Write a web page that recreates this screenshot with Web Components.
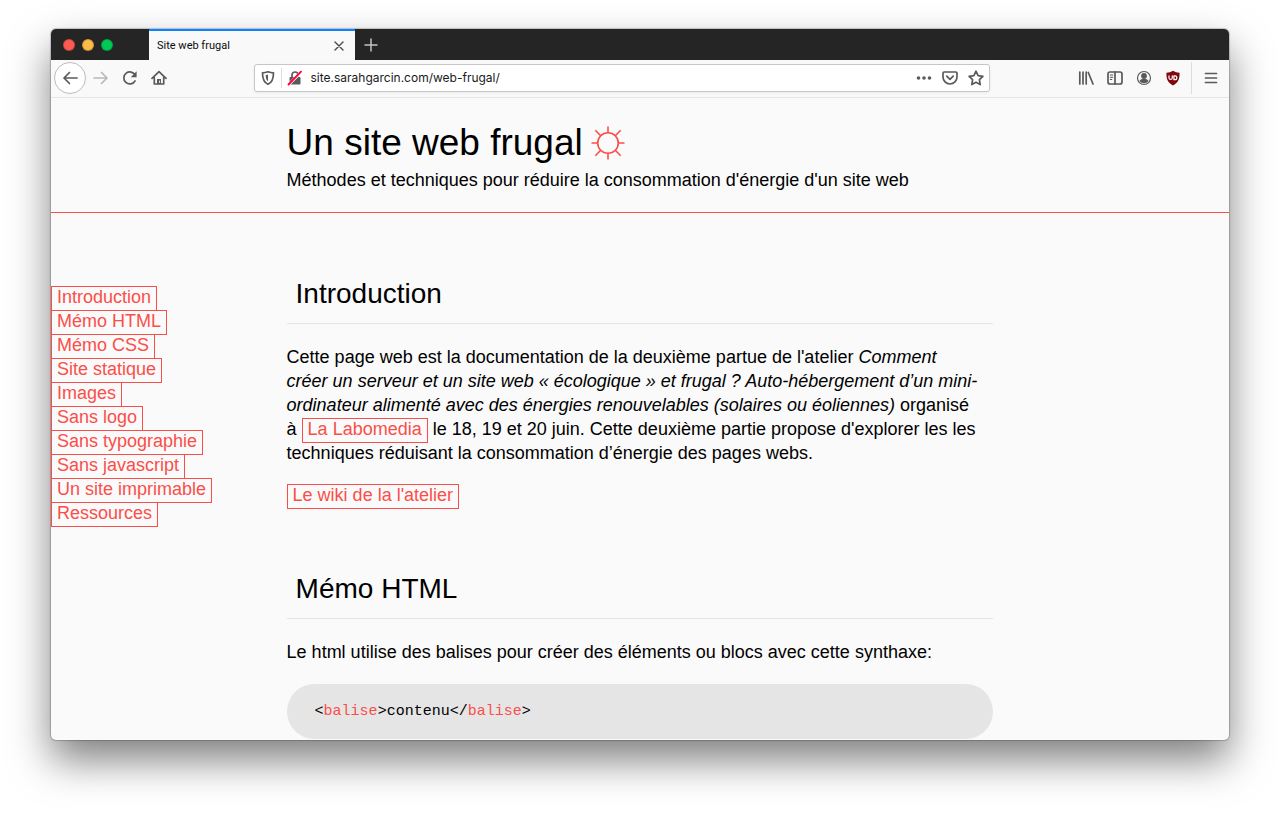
<!DOCTYPE html>
<html lang="fr">
<head>
<meta charset="utf-8">
<meta name="viewport" content="width=device-width, initial-scale=1">
<title>Site web frugal</title>
<style>
    :root {
        --accent: #fb4e49;
        --paper: #fafafa;
        --icon: #5a5a5c;
    }
    body {
        margin: 0;
        box-sizing: border-box;
        height: 100vh;
        padding: 29px 51px 74px;
        background: #fff;
        color: #000;
        font: 18px/24px "Liberation Sans", Helvetica, Arial, sans-serif;
    }
    p {
        margin: 0 0 18px;
    }
</style>
</head>
<body>

<browser-window>
    <tab-strip slot="tabs" label="Site web frugal"></tab-strip>
    <tool-bar slot="tools" url="site.sarahgarcin.com/web-frugal/"></tool-bar>

    <site-header>
        Un site web frugal
        <span slot="subtitle">Méthodes et techniques pour réduire la consommation d'énergie d'un site web</span>
    </site-header>

    <site-layout>
        <site-nav slot="nav">
            <boxed-link href="#introduction">Introduction</boxed-link>
            <boxed-link href="#html">Mémo HTML</boxed-link>
            <boxed-link href="#css">Mémo CSS</boxed-link>
            <boxed-link href="#statique">Site statique</boxed-link>
            <boxed-link href="#images">Images</boxed-link>
            <boxed-link href="#logo">Sans logo</boxed-link>
            <boxed-link href="#typographie">Sans typographie</boxed-link>
            <boxed-link href="#javascript">Sans javascript</boxed-link>
            <boxed-link href="#imprimable">Un site imprimable</boxed-link>
            <boxed-link href="#ressources">Ressources</boxed-link>
        </site-nav>

        <text-section id="introduction" heading="Introduction">
            <p>Cette page web est la documentation de la deuxième partue de l'atelier <em>Comment<br>
            créer un serveur et un site web « écologique » et frugal ? Auto-hébergement d’un mini-<br>
            ordinateur alimenté avec des énergies renouvelables (solaires ou éoliennes)</em> organisé<br>
            à <boxed-link href="#labomedia">La Labomedia</boxed-link> le 18, 19 et 20 juin. Cette deuxième partie propose d'explorer les les<br>
            techniques réduisant la consommation d’énergie des pages webs.</p>
            <p><boxed-link href="#wiki">Le wiki de la l'atelier</boxed-link></p>
        </text-section>

        <text-section id="html" heading="Mémo HTML">
            <p>Le html utilise des balises pour créer des éléments ou blocs avec cette synthaxe:</p>
            <code-block tag="balise">contenu</code-block>
        </text-section>
    </site-layout>
</browser-window>

<script>
class BrowserWindow extends HTMLElement {
    constructor() {
        super();
        this.attachShadow({mode: 'open'});
        this.shadowRoot.innerHTML = `
            <style>
                :host {
                    display: flex;
                    flex-direction: column;
                    height: 100%;
                    overflow: hidden;
                    border-radius: 5px;
                    background: var(--paper);
                    box-shadow: 0 0 1px 1px rgba(0, 0, 0, .2), 0 20px 40px rgba(0, 0, 0, .5);
                }
                .page {
                    flex: 1;
                    min-height: 0;
                    overflow: hidden;
                }
            </style>
            <slot name="tabs"></slot>
            <slot name="tools"></slot>
            <div class="page"><slot></slot></div>
        `;
    }
}

class TabStrip extends HTMLElement {
    constructor() {
        super();
        this.attachShadow({mode: 'open'});
        this.shadowRoot.innerHTML = `
            <style>
                :host {
                    display: flex;
                    flex: none;
                    height: 31px;
                    background: #252525;
                    font: 11px/16px Roboto, Inter, sans-serif;
                }
                .lights {
                    display: flex;
                    align-items: center;
                    gap: 7px;
                    width: 86px;
                    padding-left: 12px;
                }
                .lights button {
                    width: 12px;
                    height: 12px;
                    padding: 0;
                    border: 1px solid rgba(0, 0, 0, .2);
                    border-radius: 50%;
                }
                .close { background: #ff5a52; }
                .minimize { background: #febb46; }
                .zoom { background: #00ca56; }
                .tab {
                    display: flex;
                    align-items: center;
                    justify-content: space-between;
                    box-sizing: border-box;
                    width: 206px;
                    padding: 0 8px;
                    border-top: 2px solid #0a84ff;
                    background: #f9f9fa;
                    color: #0c0c0d;
                }
                .plain {
                    display: flex;
                    align-items: center;
                    justify-content: center;
                    padding: 0;
                    border: 0;
                    background: none;
                }
                .new { width: 32px; }
                svg {
                    display: block;
                    fill: none;
                    stroke-linecap: round;
                }
            </style>
            <div class="lights">
                <button class="close" aria-label="Fermer"></button>
                <button class="minimize" aria-label="Réduire"></button>
                <button class="zoom" aria-label="Agrandir"></button>
            </div>
            <div class="tab">
                <span></span>
                <button class="plain" aria-label="Fermer l'onglet">
                    <svg width="16" height="16" stroke="#4a4a4c" stroke-width="1.4"><path d="M4 4l8 8M12 4l-8 8"/></svg>
                </button>
            </div>
            <button class="plain new" aria-label="Nouvel onglet">
                <svg width="16" height="16" stroke="#c4c4c4" stroke-width="1.5"><path d="M8 2v12M2 8h12"/></svg>
            </button>
        `;
    }

    connectedCallback() {
        this.shadowRoot.querySelector('.tab span').textContent = this.getAttribute('label');
    }
}

/* Icon shapes, all on a 16 x 16 grid */
const ICONS = {
    back: '<path d="M15 8H2M7.500 2.500L2 8l5.500 5.500"/>',
    forward: '<path d="M1 8h13M8.500 2.500L14 8l-5.500 5.500"/>',
    reload: '<path d="M13 11A6 6 0 1 1 13.200 5.200"/><path d="M14.600 1.300v6H8.800z" fill="currentColor" stroke="none"/>',
    home: '<path d="M1 8.300L8 1.700l7 6.600M3.300 7.500V14h9.400V7.500"/><path d="M6 14V9h4v5z" fill="currentColor" stroke="none"/><path d="M8.600 11v1.500" stroke="#f9f9fa" stroke-width="1"/>',
    shield: '<path d="M8 1.800c2 .8 4 1.100 5.500 1.100 0 5.600-.8 9.200-5.500 11.400C3.300 12.100 2.500 8.500 2.500 2.900 4 2.900 6 2.600 8 1.800z"/><path d="M8 4.500v6.800C6.200 9.900 5.800 8 5.700 5.200z" fill="currentColor" stroke="none"/>',
    lock: '<path d="M5 8V5a3 3 0 0 1 6 0v3"/><rect x="2.500" y="7" width="11" height="7.500" rx="1" fill="currentColor" stroke="none"/><path d="M1.500 14.800L14.500 1.800" stroke="#fff" stroke-width="3"/><path d="M1.500 14.500L14 1.700" stroke="#ff0039" stroke-width="1.900"/>',
    more: '<g fill="currentColor" stroke="none"><circle cx="2.500" cy="8" r="1.800"/><circle cx="8" cy="8" r="1.800"/><circle cx="13.500" cy="8" r="1.800"/></g>',
    pocket: '<path d="M2.200 2h11.600a1.200 1.200 0 0 1 1.200 1.200V7A7 7 0 0 1 1 7V3.200A1.200 1.200 0 0 1 2.200 2z"/><path d="M4.800 6.200L8 9.300l3.200-3.100"/>',
    star: '<path d="M8 1.200l2.100 4.400 4.800.7-3.500 3.400.8 4.900L8 12.300l-4.200 2.300.8-4.900L1.100 6.300l4.800-.7z"/>',
    library: '<path d="M1.800 2v12M5 2v12M8.200 2v12M10.300 2.500L15 14"/>',
    sidebar: '<rect x="1" y="2" width="14" height="12" rx="2"/><path d="M8 2v12"/><path d="M3.300 5h2.500M3.300 7.300h2.500M3.300 9.500h1.500" stroke-width="1"/>',
    account: '<circle cx="8" cy="8" r="6.500" stroke-width="1.200"/><g fill="currentColor" stroke="none"><circle cx="8" cy="6" r="2.900"/><path d="M3.500 11c.7-1.600 2.500-1.900 4.500-1.900s3.800.3 4.500 1.900A5.500 5.500 0 0 1 8 13.300 5.500 5.500 0 0 1 3.500 11z"/></g>',
    ublock: '<path d="M8 .8c2 1.300 4 1.900 6.600 2 0 6.200-1 9.500-6.600 12.600C2.400 12.300 1.400 9 1.400 2.800 4 2.700 6 2.100 8 .8z" fill="#800610" stroke="none"/><path d="M4 5.800v2.300a1.700 1.700 0 0 0 3.300 0V5.800M8.900 5.800h1a1.900 1.900 0 0 1 0 3.900h-1z" stroke="#fff" stroke-width="1.200"/>',
    menu: '<path d="M2.500 3.500h11M2.500 8h11M2.500 12.500h11"/>'
};

class ToolButton extends HTMLElement {
    constructor() {
        super();
        this.attachShadow({mode: 'open'});
        this.shadowRoot.innerHTML = `
            <style>
                :host {
                    display: block;
                    flex: none;
                    width: 29px;
                    color: var(--icon);
                }
                :host([small]) {
                    width: 26px;
                }
                :host([disabled]) {
                    color: #b8b8ba;
                }
                button {
                    display: flex;
                    align-items: center;
                    justify-content: center;
                    box-sizing: border-box;
                    width: 100%;
                    height: 28px;
                    padding: 0;
                    border: 0;
                    background: none;
                    color: inherit;
                }
                :host([round]) {
                    width: 32px;
                }
                :host([round]) button {
                    height: 32px;
                    border: 1px solid #bdbdbf;
                    border-radius: 50%;
                    background: #fff;
                }
                svg {
                    display: block;
                    fill: none;
                    stroke: currentColor;
                    stroke-width: 1.7;
                    stroke-linecap: round;
                    stroke-linejoin: round;
                }
            </style>
            <button><svg width="16" height="16" viewBox="0 0 16 16"></svg></button>
        `;
    }

    connectedCallback() {
        const svg = this.shadowRoot.querySelector('svg');
        const button = this.shadowRoot.querySelector('button');
        svg.innerHTML = ICONS[this.getAttribute('icon')];
        button.setAttribute('aria-label', this.getAttribute('label'));
        button.disabled = this.hasAttribute('disabled');
    }
}

class ToolBar extends HTMLElement {
    constructor() {
        super();
        this.attachShadow({mode: 'open'});
        this.shadowRoot.innerHTML = `
            <style>
                :host {
                    display: flex;
                    flex: none;
                    align-items: center;
                    box-sizing: border-box;
                    height: 38px;
                    padding: 0 4px 1px 3px;
                    border-bottom: 1px solid #e6e6e7;
                    background: #f9f9fa;
                }
                .spacer {
                    flex: 1;
                }
                .address {
                    display: flex;
                    flex: 9;
                    align-items: center;
                    box-sizing: border-box;
                    height: 28px;
                    min-width: 0;
                    border: 1px solid #c6c6c8;
                    border-radius: 3px;
                    background: #fff;
                    box-shadow: 0 1px 3px rgba(0, 0, 0, .06);
                }
                .line {
                    width: 1px;
                    height: 20px;
                    background: #dededf;
                }
                .tall {
                    height: 32px;
                    margin: 0 4px;
                }
                input {
                    flex: 1;
                    min-width: 0;
                    margin: 0 0 0 2px;
                    padding: 0;
                    border: 0;
                    outline: 0;
                    background: none;
                    color: #1a1a1c;
                    font: 12px/18px Inter, Roboto, sans-serif;
                }
            </style>
            <tool-button round icon="back" label="Précédent"></tool-button>
            <tool-button disabled icon="forward" label="Suivant"></tool-button>
            <tool-button icon="reload" label="Actualiser"></tool-button>
            <tool-button icon="home" label="Accueil"></tool-button>
            <div class="spacer"></div>
            <div class="address">
                <tool-button small icon="shield" label="Protection contre le pistage"></tool-button>
                <div class="line"></div>
                <tool-button small icon="lock" label="Connexion non sécurisée"></tool-button>
                <input type="text" aria-label="Adresse" spellcheck="false">
                <tool-button small icon="more" label="Actions pour la page"></tool-button>
                <tool-button small icon="pocket" label="Enregistrer dans Pocket"></tool-button>
                <tool-button small icon="star" label="Marquer cette page"></tool-button>
            </div>
            <div class="spacer"></div>
            <tool-button icon="library" label="Bibliothèque"></tool-button>
            <tool-button icon="sidebar" label="Barres latérales"></tool-button>
            <tool-button icon="account" label="Compte"></tool-button>
            <tool-button icon="ublock" label="Bloqueur"></tool-button>
            <div class="line tall"></div>
            <tool-button icon="menu" label="Menu"></tool-button>
        `;
    }

    connectedCallback() {
        this.shadowRoot.querySelector('input').value = this.getAttribute('url');
    }
}

class SiteHeader extends HTMLElement {
    constructor() {
        super();
        this.attachShadow({mode: 'open'});
        this.shadowRoot.innerHTML = `
            <style>
                :host {
                    display: block;
                    padding: 23px 20% 20px;
                    border-bottom: 1px solid var(--accent);
                }
                h1 {
                    display: flex;
                    align-items: center;
                    gap: 8px;
                    margin: 0 0 3px;
                    font-size: 37px;
                    font-weight: normal;
                    line-height: 44px;
                }
                p {
                    margin: 0;
                    white-space: nowrap;
                }
                svg {
                    fill: none;
                    stroke: var(--accent);
                    stroke-width: 1.6;
                }
            </style>
            <h1><span><slot></slot></span>
                <svg width="34" height="34" viewBox="0 0 34 34" aria-hidden="true">
                    <circle cx="17" cy="17" r="10.300"/>
                    <path d="M17 .5v6.200M17 27.300v6.200M.5 17h6.200M27.300 17h6.200M4.300 4.300l5.400 5.400M24.300 24.300l5.400 5.400M29.700 4.300l-5.400 5.400M9.700 24.300l-5.400 5.400"/>
                </svg>
            </h1>
            <p><slot name="subtitle"></slot></p>
        `;
    }
}

/* Menu in the first fifth, text in the three in the middle */
class SiteLayout extends HTMLElement {
    constructor() {
        super();
        this.attachShadow({mode: 'open'});
        this.shadowRoot.innerHTML = `
            <style>
                :host {
                    display: grid;
                    grid-template-columns: 1fr 3fr 1fr;
                    padding-top: 62px;
                }
                main {
                    display: flex;
                    flex-direction: column;
                    gap: 45px;
                    min-width: 0;
                }
            </style>
            <slot name="nav"></slot>
            <main><slot></slot></main>
        `;
    }
}

class SiteNav extends HTMLElement {
    constructor() {
        super();
        this.attachShadow({mode: 'open'});
        this.shadowRoot.innerHTML = `
            <style>
                :host {
                    display: block;
                    padding-top: 10px;
                }
                nav {
                    display: flex;
                    flex-direction: column;
                    white-space: nowrap;
                }
            </style>
            <nav><slot></slot></nav>
        `;
    }
}

class BoxedLink extends HTMLElement {
    constructor() {
        super();
        this.attachShadow({mode: 'open'});
        this.shadowRoot.innerHTML = `
            <style>
                :host {
                    display: inline;
                }
                a {
                    padding: 0 5px 3px;
                    border: 1px solid var(--accent);
                    color: var(--accent);
                    text-decoration: none;
                }
                a:hover {
                    background: var(--accent);
                    color: #fff;
                }
            </style>
            <a><slot></slot></a>
        `;
    }

    connectedCallback() {
        this.shadowRoot.querySelector('a').setAttribute('href', this.getAttribute('href'));
    }
}

class TextSection extends HTMLElement {
    constructor() {
        super();
        this.attachShadow({mode: 'open'});
        this.shadowRoot.innerHTML = `
            <style>
                :host {
                    display: block;
                }
                h2 {
                    margin: 0 0 21px;
                    padding: 1px 9px 11px;
                    border-bottom: 1px solid #e5e5e5;
                    font-size: 28px;
                    font-weight: normal;
                    line-height: 36px;
                }
            </style>
            <h2></h2>
            <slot></slot>
        `;
    }

    connectedCallback() {
        this.shadowRoot.querySelector('h2').textContent = this.getAttribute('heading');
    }
}

class CodeBlock extends HTMLElement {
    constructor() {
        super();
        this.attachShadow({mode: 'open'});
        this.shadowRoot.innerHTML = `
            <style>
                :host {
                    display: block;
                    margin-top: 20px;
                }
                pre {
                    margin: 0;
                    padding: 18px 28px;
                    border-radius: 28px;
                    background: #e5e5e5;
                    font: 15px/19px "Liberation Mono", "Courier New", monospace;
                }
                code {
                    font: inherit;
                }
                b {
                    color: var(--accent);
                    font-weight: normal;
                }
            </style>
            <pre><code>&lt;<b></b>&gt;<slot></slot>&lt;/<b></b>&gt;</code></pre>
        `;
    }

    connectedCallback() {
        this.shadowRoot.querySelectorAll('b').forEach(b => {
            b.textContent = this.getAttribute('tag');
        });
    }
}

customElements.define("browser-window", BrowserWindow);
customElements.define("tab-strip", TabStrip);
customElements.define("tool-button", ToolButton);
customElements.define("tool-bar", ToolBar);
customElements.define("site-header", SiteHeader);
customElements.define("site-layout", SiteLayout);
customElements.define("site-nav", SiteNav);
customElements.define("boxed-link", BoxedLink);
customElements.define("text-section", TextSection);
customElements.define("code-block", CodeBlock);
</script>
</body>
</html>
